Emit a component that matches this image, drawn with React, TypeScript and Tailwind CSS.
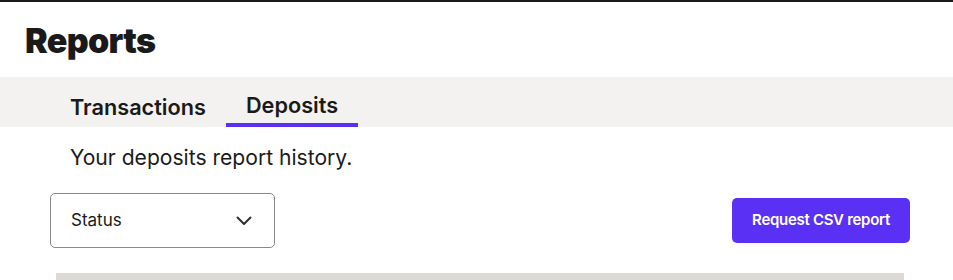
import React from "react";

export default function App() {
  return (
    <div className="w-[953px] h-[280px] overflow-hidden bg-white text-[#1a1a1a]" style={{ fontFamily: "Inter, 'Noto Sans', sans-serif" }}>
      <div className="h-[2px] bg-[#1a1a1a]" />
      <div className="h-[75px] flex items-center pl-[25px]">
        <h1 className="text-[34px] font-black tracking-[-0.02em] leading-none pt-[2px]">Reports</h1>
      </div>
      <div className="h-[50px] bg-[#f3f2f1] flex items-end pl-[50px]">
        <div className="px-5 h-[49px] flex items-center pt-[10px] text-[21.7px] font-semibold">Transactions</div>
        <div className="px-5 h-[49px] flex items-center pt-[10px] text-[21.7px] font-semibold border-b-[4px] border-[#5a31f4]">Deposits</div>
      </div>
      <div className="pl-[70px] pt-[17px] text-[21.1px] leading-[28px]">Your deposits report history.</div>
      <div className="flex items-start justify-between pl-[50px] pr-[43px] mt-[21px]">
        <div className="w-[225px] h-[55px] border border-[#8a8a8a] rounded-[5px] flex items-center justify-between pl-[20px] pr-[22px]">
          <span className="text-[17px]">Status</span>
          <svg width="16" height="10" viewBox="0 0 16 10" fill="none" stroke="#303030" strokeWidth="2" strokeLinecap="round" strokeLinejoin="round">
            <path d="M1.5 1.5 L8 8 L14.5 1.5" />
          </svg>
        </div>
        <button className="mt-[5px] w-[178px] h-[45px] bg-[#5a31f4] rounded-[5px] text-white text-[15px] font-semibold tracking-[-0.02em]">Request CSV report</button>
      </div>
      <div className="ml-[56px] w-[848px] h-[8px] bg-[#dcdad7] mt-[25px]" />
    </div>
  );
}
